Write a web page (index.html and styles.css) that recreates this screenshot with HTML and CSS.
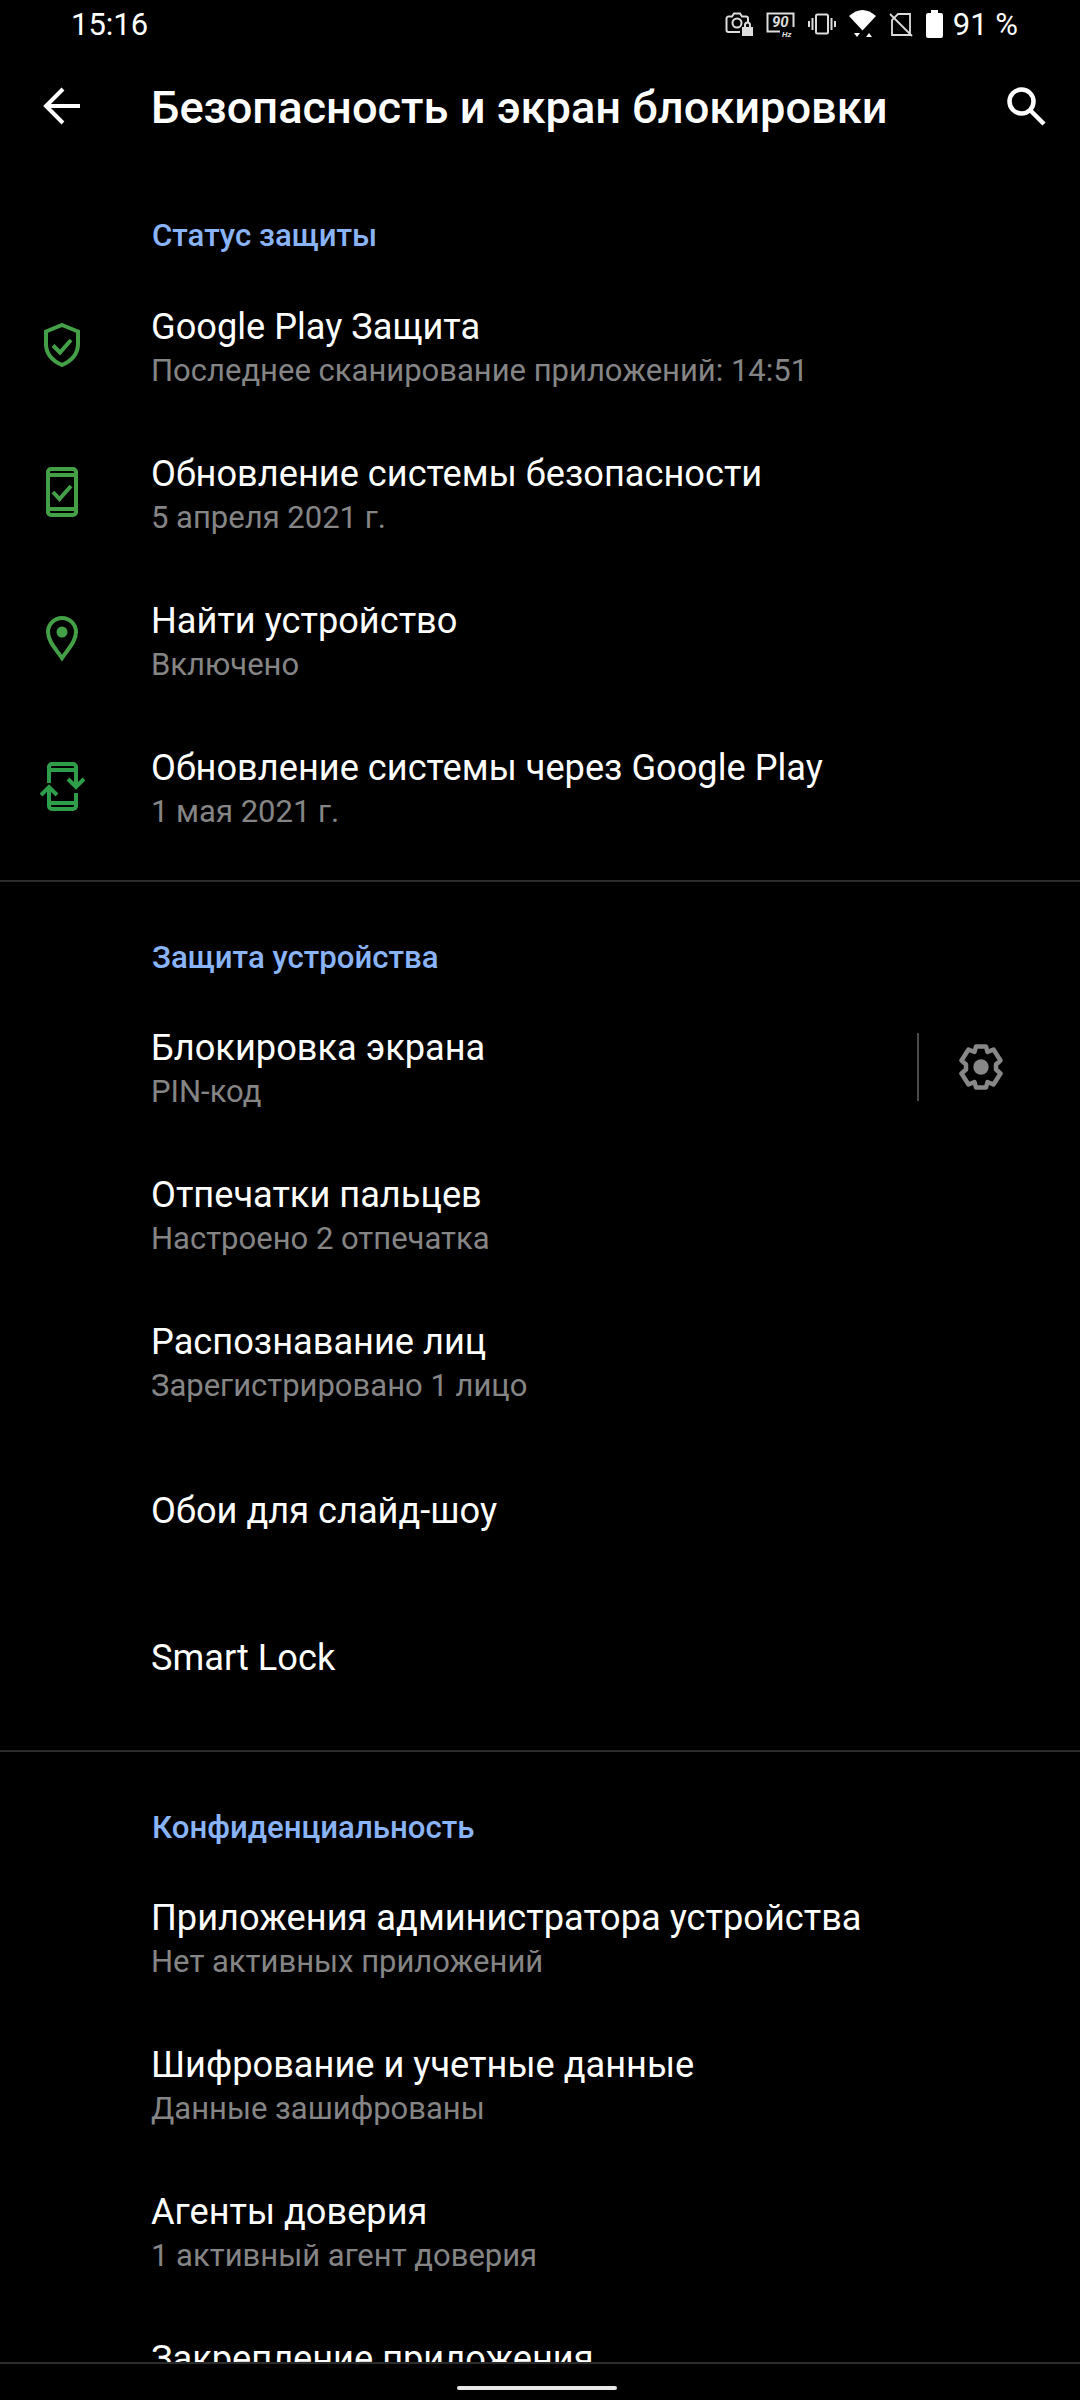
FILE: index.html
```html
<!DOCTYPE html>
<html lang="ru">
<head>
<meta charset="utf-8">
<title>Безопасность и экран блокировки</title>
<link rel="stylesheet" href="styles.css">
</head>
<body>
<div class="app">
  <header class="status">
    <span class="clock">15:16</span>
    <div class="status-icons">
      <svg class="si" width="28" height="25" viewBox="0 0 28 25" fill="none" stroke="#ddd" stroke-width="2"><path d="M15 20H3.500a2 2 0 0 1-2-2V6.500a2 2 0 0 1 2-2H7L9 1.500h6l2 3h4a2 2 0 0 1 2 2V10"/><circle cx="12" cy="11" r="4.500"/><path fill="#ddd" stroke="none" d="M17 15h11v9H17z"/><path d="M20 15v-2a2.500 2.500 0 0 1 5 0v2"/></svg>
      <svg class="si" width="29" height="25" viewBox="0 0 29 25" fill="none"><path d="M27.500 15V1.500h-26v18H14" stroke="#ddd" stroke-width="2"/><text class="hz-num" x="6" y="15">90</text><text class="hz-unit" x="16" y="24.500">Hz</text></svg>
      <svg class="si" width="28" height="22" viewBox="0 0 28 22" fill="none" stroke="#ddd" stroke-width="2"><rect x="8" y="1.500" width="12" height="19" rx="1.500"/><path d="M4.500 5v12M1 8v6M23.500 5v12M27 8v6"/></svg>
      <svg class="si" width="27" height="28" viewBox="0 0 27 28"><path fill="#fff" d="M0 6Q13.500-6 27 6L13.500 20.500z"/><path fill="#fff" d="M5 23h6l-3 4zM17 27h6l-3-4z"/></svg>
      <svg class="si" width="24" height="25" viewBox="0 0 24 25" fill="none" stroke="#ddd" stroke-width="1.800"><path d="M3 8v15h18V2H9z"/><path d="M1 2l22 22"/></svg>
      <svg class="si" width="17" height="28" viewBox="0 0 17 28"><path fill="#fff" d="M5 0h7v3h3a2 2 0 0 1 2 2v21a2 2 0 0 1-2 2H2a2 2 0 0 1-2-2V5a2 2 0 0 1 2-2h3z"/></svg>
      <span class="battery">91 %</span>
    </div>
  </header>

  <div class="toolbar">
    <svg class="tb-icon" width="40" height="40" viewBox="0 0 40 40" fill="none" stroke="#fff" stroke-width="4"><path d="M38 20H5M21 3L4 20l17 17"/></svg>
    <h1 class="title">Безопасность и экран блокировки</h1>
    <svg class="tb-icon" width="40" height="40" viewBox="0 0 40 40" fill="none" stroke="#fff" stroke-width="4.500"><circle cx="15.500" cy="15.500" r="12"/><path d="M24 24l14 14"/></svg>
  </div>

  <main class="list">
    <section class="group">
      <h2 class="group-title">Статус защиты</h2>
      <div class="row">
        <div class="row-icon"><svg width="36" height="44" viewBox="0 0 36 44" fill="none" stroke="#43a047" stroke-width="4"><path d="M18 2l16 6.500V21c0 10-7 17-16 21C9 38 2 31 2 21V8.500z"/><path d="M9 22.500l7 7L27 17"/></svg></div>
        <div class="row-text"><div class="row-title">Google Play Защита</div><div class="row-sub">Последнее сканирование приложений: 14:51</div></div>
      </div>
      <div class="row">
        <div class="row-icon"><svg width="32" height="50" viewBox="0 0 32 50" fill="none" stroke="#43a047" stroke-width="4"><rect x="2" y="2" width="28" height="46" rx="3"/><path d="M2 8h28M2 42h28"/><path d="M7 25l6.500 7L25 19"/></svg></div>
        <div class="row-text"><div class="row-title">Обновление системы безопасности</div><div class="row-sub">5 апреля 2021 г.</div></div>
      </div>
      <div class="row">
        <div class="row-icon"><svg width="32" height="46" viewBox="0 0 32 46" fill="none" stroke="#43a047" stroke-width="4"><path d="M16 42C9 32 2 25 2 16a14 14 0 0 1 28 0c0 9-7 16-14 26z"/><circle cx="16" cy="16" r="5.500" fill="#43a047" stroke="none"/></svg></div>
        <div class="row-text"><div class="row-title">Найти устройство</div><div class="row-sub">Включено</div></div>
      </div>
      <div class="row">
        <div class="row-icon row-icon-tall"><svg width="45" height="50" viewBox="0 0 45 50" fill="none" stroke="#2e9e4a" stroke-width="4"><path d="M9 21V5a3 3 0 0 1 3-3h21a3 3 0 0 1 3 3v19M9 26v18a3 3 0 0 0 3 3h21a3 3 0 0 0 3-3V31M9 8h27M9 41h27"/><path d="M28 17l8 8 8-8M1 33l8-8 8 8"/></svg></div>
        <div class="row-text"><div class="row-title">Обновление системы через Google Play</div><div class="row-sub">1 мая 2021 г.</div></div>
      </div>
    </section>

    <section class="group">
      <h2 class="group-title">Защита устройства</h2>
      <div class="row">
        <div class="row-icon"></div>
        <div class="row-text"><div class="row-title">Блокировка экрана</div><div class="row-sub">PIN-код</div></div>
        <div class="row-action">
          <svg width="44" height="46" viewBox="0 0 44 46" fill="none" stroke="#888" stroke-width="4.500" stroke-linejoin="round"><path d="M17 2.500h10L28.500 8l6-2.500 7 11L37 20.500v5l4.500 4-7 11-6-2.500-1.500 5.500H17L15.500 38l-6 2.500-7-11L7 25.500v-5l-4.500-4 7-11 6 2.500z"/><circle cx="22" cy="23" r="7.700" fill="#888" stroke="none"/></svg>
        </div>
      </div>
      <div class="row">
        <div class="row-icon"></div>
        <div class="row-text"><div class="row-title">Отпечатки пальцев</div><div class="row-sub">Настроено 2 отпечатка</div></div>
      </div>
      <div class="row">
        <div class="row-icon"></div>
        <div class="row-text"><div class="row-title">Распознавание лиц</div><div class="row-sub">Зарегистрировано 1 лицо</div></div>
      </div>
      <div class="row">
        <div class="row-icon"></div>
        <div class="row-text"><div class="row-title">Обои для слайд-шоу</div></div>
      </div>
      <div class="row">
        <div class="row-icon"></div>
        <div class="row-text"><div class="row-title">Smart Lock</div></div>
      </div>
    </section>

    <section class="group">
      <h2 class="group-title">Конфиденциальность</h2>
      <div class="row">
        <div class="row-icon"></div>
        <div class="row-text"><div class="row-title">Приложения администратора устройства</div><div class="row-sub">Нет активных приложений</div></div>
      </div>
      <div class="row">
        <div class="row-icon"></div>
        <div class="row-text"><div class="row-title">Шифрование и учетные данные</div><div class="row-sub">Данные зашифрованы</div></div>
      </div>
      <div class="row">
        <div class="row-icon"></div>
        <div class="row-text"><div class="row-title">Агенты доверия</div><div class="row-sub">1 активный агент доверия</div></div>
      </div>
      <div class="row">
        <div class="row-icon"></div>
        <div class="row-text row-text-lifted"><div class="row-title">Закрепление приложения</div></div>
      </div>
    </section>
  </main>

  <div class="navbar"><div class="pill"></div></div>
</div>
</body>
</html>
```

FILE: styles.css
```css
* { box-sizing: border-box; }
html, body { margin: 0; padding: 0; background: #000; }
body { font-family: Roboto, "Noto Sans", sans-serif; color: #fff; }
.app { position: relative; width: 1080px; height: 2400px; overflow: hidden; background: #000; }

.status { display: flex; justify-content: space-between; align-items: center; height: 48px; padding: 0 62px 0 71px; }
.clock { font-size: 31px; }
.status-icons { display: flex; align-items: center; gap: 13px; }
.si { display: block; }
.battery { font-size: 31px; margin-left: -3px; white-space: nowrap; }
.hz-num { font: italic 700 15px Roboto, sans-serif; fill: #ddd; }
.hz-unit { font: italic 700 8px Roboto, sans-serif; fill: #ddd; }

.toolbar { display: flex; align-items: center; height: 113px; padding: 3px 34px 0 42px; }
.tb-icon { display: block; flex: none; }
.title { flex: 1; margin: 3px 0 0 69px; font-size: 45.2px; font-weight: 500; white-space: nowrap; }

.group { border-bottom: 2px solid #2c2c2c; padding-bottom: 17px; }
.group + .group { padding-bottom: 19px; }
.group:last-child { border-bottom: 0; }
.group-title { margin: 0; height: 114px; padding: 55px 0 0 152px; font-size: 31.2px; line-height: 40px; font-weight: 500; color: #8ab4f8; }
.group + .group .group-title { padding-top: 56px; }

.row { display: flex; align-items: center; height: 147px; padding-right: 77px; }
.row-icon { flex: none; width: 124px; margin-right: 27px; padding-bottom: 8px; display: flex; justify-content: center; }
.row-icon-tall { padding-bottom: 6px; }
.row-icon svg { display: block; }
.row-text { flex: 1; }
.row-text-lifted { padding-bottom: 44px; }
.row-title { font-size: 36.2px; line-height: 44px; }
.row-sub { font-size: 31px; line-height: 44px; color: #858585; }
.row-action { display: flex; align-items: center; height: 68px; margin-bottom: 6px; padding-left: 40px; border-left: 2px solid #4a4a4a; }
.row-action svg { display: block; }

.navbar { position: absolute; left: 0; right: 0; bottom: 0; height: 38px; background: #000; border-top: 2px solid #2c2c2c; display: flex; justify-content: center; padding: 22px 7px 0 0; }
.pill { width: 160px; height: 4px; border-radius: 2px; background: #e8e8e8; }
```
